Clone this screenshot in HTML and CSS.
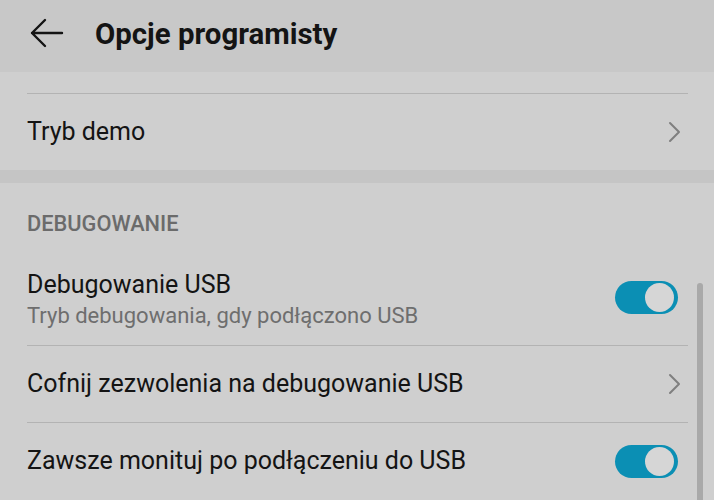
FILE: index.html
```html
<!DOCTYPE html>
<html lang="pl">
<head>
    <meta charset="UTF-8">
    <title>Opcje programisty</title>
    <link rel="stylesheet" href="styles.css">
</head>
<body>
    <header class="topbar">
        <svg class="back" width="36" height="32" viewBox="0 0 36 32">
            <path d="M34 16 H4 M17 3 L4 16 L17 29" fill="none" stroke="#141414" stroke-width="2.4" stroke-linecap="round" stroke-linejoin="round"/>
        </svg>
        <h1 class="title">Opcje programisty</h1>
    </header>

    <section class="card card-top">
        <div class="divider"></div>
        <div class="row">
            <span class="label">Tryb demo</span>
            <svg class="chevron" width="14" height="22" viewBox="0 0 14 22">
                <path d="M2 2 L11 11 L2 20" fill="none" stroke="#7f7f7f" stroke-width="2" stroke-linecap="round" stroke-linejoin="round"/>
            </svg>
        </div>
    </section>

    <div class="band"></div>

    <section class="card">
        <div class="section-title">DEBUGOWANIE</div>
        <div class="row row-double">
            <div class="texts">
                <span class="label">Debugowanie USB</span>
                <span class="sub">Tryb debugowania, gdy podłączono USB</span>
            </div>
            <div class="toggle"><div class="knob"></div></div>
        </div>
        <div class="divider"></div>
        <div class="row">
            <span class="label">Cofnij zezwolenia na debugowanie USB</span>
            <svg class="chevron" width="14" height="22" viewBox="0 0 14 22">
                <path d="M2 2 L11 11 L2 20" fill="none" stroke="#7f7f7f" stroke-width="2" stroke-linecap="round" stroke-linejoin="round"/>
            </svg>
        </div>
        <div class="divider"></div>
        <div class="row">
            <span class="label">Zawsze monituj po podłączeniu do USB</span>
            <div class="toggle"><div class="knob"></div></div>
        </div>
    </section>

    <div class="scrollbar"></div>
</body>
</html>
```

FILE: styles.css
```css
body {
    margin: 0;
    padding: 0;
    width: 714px;
    height: 500px;
    overflow: hidden;
    position: relative;
    background-color: #cfcfcf;
    font-family: Roboto, "Noto Sans", sans-serif;
    color: #141414;
}

.topbar {
    height: 72px;
    display: flex;
    align-items: center;
    background-color: #c8c8c8;
    padding-left: 28px;
    box-sizing: border-box;
}

.back {
    margin-top: -6px;
}

.title {
    margin: 0 0 0 31px;
    font-size: 29.4px;
    font-weight: 700;
    margin-top: -5px;
}

.card {
    background-color: #cfcfcf;
    padding: 0 26px 0 27px;
}

.card-top {
    padding-top: 21px;
}

.band {
    height: 13px;
    background-color: #c5c5c5;
}

.divider {
    height: 1px;
    background-color: #b3b3b3;
}

.row {
    height: 76px;
    display: flex;
    align-items: center;
    justify-content: space-between;
    padding-right: 6px;
}

.label {
    font-size: 25px;
    line-height: 30px;
}

.section-title {
    padding-top: 28px;
    height: 39px;
    line-height: 26px;
    font-size: 21.8px;
    font-weight: 500;
    color: #6b6b6b;
}

.row-double {
    height: auto;
    padding-top: 20px;
    padding-bottom: 15px;
    align-items: flex-start;
}

.texts {
    display: flex;
    flex-direction: column;
}

.sub {
    font-size: 22px;
    line-height: 28px;
    margin-top: 2px;
    color: #6e6e6e;
}

.toggle {
    width: 63px;
    height: 33px;
    border-radius: 17px;
    background-color: #0b8fb4;
    position: relative;
    margin-right: 4px;
}

.row-double .toggle {
    margin-top: 11px;
}

.knob {
    position: absolute;
    right: 4px;
    top: 2px;
    width: 29px;
    height: 29px;
    border-radius: 50%;
    background-color: #d6d6d6;
}

.scrollbar {
    position: absolute;
    left: 697px;
    top: 283px;
    width: 6px;
    height: 230px;
    border-radius: 3px;
    background-color: #a9a9a9;
}
```
